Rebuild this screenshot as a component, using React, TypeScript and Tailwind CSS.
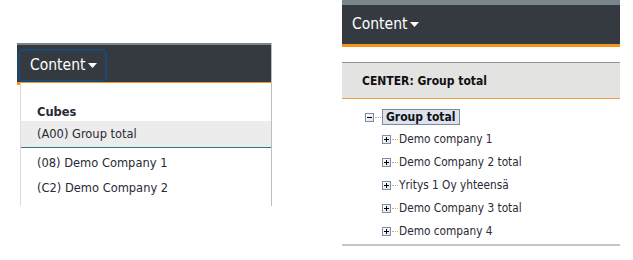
import React from "react";

const Caret = () => (
  <svg width="9" height="5" viewBox="0 0 9 5" className="ml-[3px]">
    <path d="M0 0 H9 L4.5 5 Z" fill="#ffffff" />
  </svg>
);

const TreeBox = ({ open }: { open?: boolean }) => (
  <span className="relative inline-block w-[9px] h-[9px] border border-[#7d8fa6] bg-gradient-to-br from-white to-[#dfe4ea] shrink-0">
    <span className="absolute left-[1px] top-[3px] w-[5px] h-px bg-black" />
    {!open && <span className="absolute left-[3px] top-[1px] w-px h-[5px] bg-black" />}
  </span>
);

const Dots = () => (
  <span className="inline-block w-[6px] border-t border-dotted border-[#b0b0b0] mx-px" />
);

export default function App() {
  const children = [
    "Demo company 1",
    "Demo Company 2 total",
    "Yritys 1 Oy yhteensä",
    "Demo Company 3 total",
    "Demo company 4",
  ];
  return (
    <div className="w-[633px] h-[260px] bg-white flex items-start font-['DejaVu_Sans_Condensed','DejaVu_Sans',sans-serif] text-[#2a2a35] overflow-hidden">
      {/* Left panel */}
      <div className="relative ml-[17px] mt-[43px] w-[255px] h-[163px] border-r border-[#bdbdbd]">
        <div className="h-[2px] bg-[#7a868e]" />
        <div className="h-[37px] bg-[#343a40] flex items-end pl-px">
          <div className="h-[33px] w-[89px] border-2 border-[#1d4a75] rounded-[5px] flex items-center pl-[10px] text-white text-[15.5px]">
            Content
            <Caret />
          </div>
        </div>
        <div className="h-[3px] bg-[#f7941d]" />
        <div className="absolute left-[3px] top-[40px] right-0 bottom-0 bg-white border-l border-[#dcdcdc] pt-[20px] text-[12.75px]">
          <div className="h-[18px] flex items-center pl-[16px] font-bold">Cubes</div>
          <div className="h-[27px] flex items-center pl-[16px] bg-[#ececec] border-b border-[#2f7884]">
            (A00) Group total
          </div>
          <div className="mt-[2px] h-[25px] flex items-center pl-[16px]">(08) Demo Company 1</div>
          <div className="h-[25px] flex items-center pl-[16px]">(C2) Demo Company 2</div>
        </div>
      </div>

      {/* Right panel */}
      <div className="ml-[70px] w-[278px] flex flex-col">
        <div className="h-[5px] bg-[#7a868e]" />
        <div className="h-[39px] bg-[#343a40] flex items-center pl-[10px] text-white text-[15.5px]">
          Content
          <Caret />
        </div>
        <div className="h-[3px] bg-[#f7941d]" />
        <div className="h-[15px]" />
        <div className="h-[37px] bg-[#e3e3e1] border-t border-[#8b949a] border-b border-b-[#f0a040] flex items-center pl-[20px] text-[12px] font-bold text-[#111]">
          CENTER: Group total
        </div>
        <div className="pt-[10px] text-[11.75px]">
          <div className="h-[16px] flex items-center pl-[23px]">
            <TreeBox open />
            <Dots />
            <span className="h-[16px] flex items-center px-[3px] bg-[#dde3ee] border border-[#7e8a99] font-bold text-[#111] text-[12px]">
              Group total
            </span>
          </div>
          <div className="pt-[3px]">
            {children.map((c) => (
              <div key={c} className="h-[23px] flex items-center pl-[40px]">
                <TreeBox />
                <Dots />
                <span>{c}</span>
              </div>
            ))}
          </div>
        </div>
        <div className="mt-[1px] h-[2px] bg-[#c6c6c6]" />
      </div>
    </div>
  );
}
